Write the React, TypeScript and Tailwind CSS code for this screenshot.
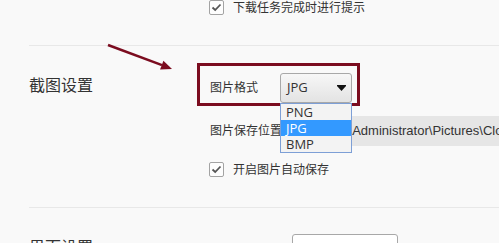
const font = "font-['Open_Sans','Noto_Sans_CJK_SC',sans-serif]";

function Check() {
  return (
    <span className="flex h-[15px] w-[15px] items-center justify-center rounded-[2px] border border-[#a3a3a3] bg-[#fdfdfd]">
      <svg width="11" height="9" viewBox="0 0 11 9">
        <path d="M1.5 4.5 L4.2 7 L9.5 1.5" fill="none" stroke="#555" strokeWidth="1.8" />
      </svg>
    </span>
  );
}

export default function App() {
  return (
    <div className={`relative h-[243px] w-[499px] overflow-hidden bg-[#f9f9f9] text-[#333] ${font}`}>
      {/* previous section tail */}
      <div className="flex h-[15px] items-center gap-[9px] pl-[209px] text-[12px] leading-none">
        <Check />
        <span>下载任务完成时进行提示</span>
      </div>

      <div className="ml-[29px] mt-[30px] h-px bg-[#e8e8e8]" />

      {/* 截图设置 */}
      <div className="flex">
        <div className="w-[197px] shrink-0 pl-[29px] pt-[28px] text-[16px] leading-[22px]">截图设置</div>
        <div className="shrink-0 pt-[17px]">
          <div className="relative flex h-[43px] w-[163px] items-end border-[3px] border-[#7b0c1f] pl-[10px] pr-[5px]">
            <span className="mr-auto flex h-[30px] items-center text-[12px]">图片格式</span>
            <div className="flex h-[30px] w-[72px] items-center justify-between rounded-[3px] border border-[#a8a8a8] bg-gradient-to-b from-[#f7f7f7] to-[#e3e3e3] pl-[6px] pr-[5px] text-[13px]">
              <span>JPG</span>
              <svg width="9" height="6" viewBox="0 0 9 6">
                <path d="M0 0 H9 V1 L4.5 6 L0 1 Z" fill="#111" />
              </svg>
            </div>
            {/* open list */}
            <div className="absolute left-[80px] top-[37px] z-10 flex w-[72px] flex-col border border-[#7d9fd6] bg-[#f3f3f3] text-[13px] leading-[16px]">
              <span className="pl-[5px]">PNG</span>
              <span className="bg-[#3399ff] pl-[5px] text-white">JPG</span>
              <span className="pl-[5px]">BMP</span>
            </div>
          </div>

          <div className="ml-[13px] mt-[10px] flex h-[30px] w-[300px] items-center text-[12px]">
            <span className="shrink-0">图片保存位置</span>
            <div className="ml-[2px] flex h-full flex-1 items-center overflow-hidden whitespace-nowrap bg-[#e6e6e6] pl-[14px] font-['Liberation_Sans',sans-serif] text-[13px]">
              C:\Users\Administrator\Pictures\CloudMusic
            </div>
          </div>

          <div className="ml-[12px] mt-[16px] flex h-[15px] items-center gap-[9px] text-[12px] leading-none">
            <Check />
            <span>开启图片自动保存</span>
          </div>
        </div>
      </div>

      <div className="ml-[29px] mt-[30px] h-px bg-[#e8e8e8]" />

      {/* 界面设置 */}
      <div className="flex">
        <div className="w-[292px] shrink-0 pl-[29px] pt-[28px] text-[16px] leading-[22px]">界面设置</div>
        <div className="shrink-0 pt-[26px]">
          <div className="h-[28px] w-[106px] rounded-[3px] border border-[#a8a8a8] bg-white" />
        </div>
      </div>

      {/* annotation arrow */}
      <svg className="absolute left-0 top-0" width="499" height="243">
        <line x1="108" y1="45" x2="162" y2="65.2" stroke="#7b0c1f" strokeWidth="2.5" />
        <polygon points="172,69 160.1,69.5 163.4,60.7" fill="#7b0c1f" />
      </svg>
    </div>
  );
}
